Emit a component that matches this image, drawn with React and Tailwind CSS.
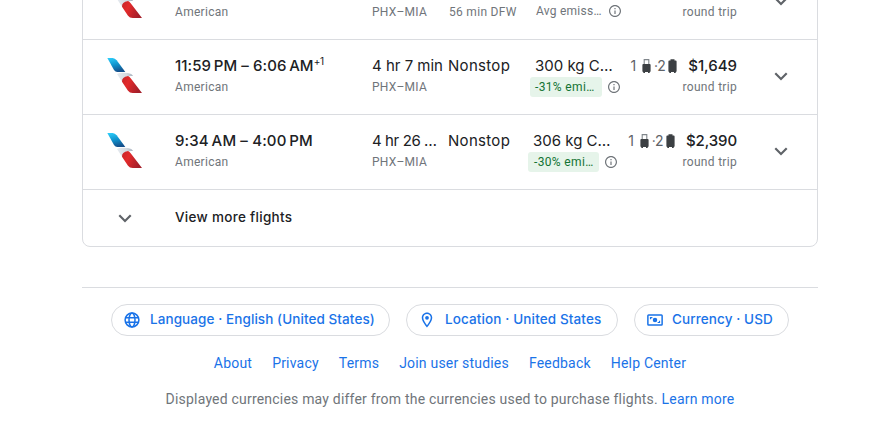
import React from "react";

const sans = "font-['Inter','Liberation_Sans',sans-serif]";
const roboto = "font-[Roboto,sans-serif]";

function AirlineLogo() {
  return (
    <svg className="block h-[35px] w-[35px]" viewBox="81 69 105 105">
      <defs>
        <linearGradient id="blue" x1="0.2" y1="0" x2="0.5" y2="1">
          <stop offset="0" stopColor="#2bcbf8" />
          <stop offset="0.5" stopColor="#1093cd" />
          <stop offset="1" stopColor="#14508c" />
        </linearGradient>
        <linearGradient id="red" x1="0" y1="0" x2="1" y2="0.4">
          <stop offset="0" stopColor="#c5262b" />
          <stop offset="0.4" stopColor="#e32a2b" />
          <stop offset="1" stopColor="#a51f2a" />
        </linearGradient>
        <linearGradient id="grey" x1="0" y1="0" x2="1" y2="0">
          <stop offset="0" stopColor="#e6ebf0" />
          <stop offset="0.6" stopColor="#d3dae1" />
          <stop offset="1" stopColor="#a9b3bf" />
        </linearGradient>
      </defs>
      <path fill="url(#blue)" d="M82 69h16q7 1 12 7l26 35h-24q-6 0-10-6z" />
      <path fill="url(#grey)" d="M111 117q6-4 16-4l16 1q13 2 16 9-17-1-24 4-8 5-9 13z" />
      <path fill="url(#red)" d="M126 140q-1-14 18-17 4 1 8 7l34 44h-28q-9 0-14-7z" />
    </svg>
  );
}

function Chevron() {
  return (
    <svg className="block h-6 w-6" viewBox="0 0 24 24" fill="#5f6368">
      <path d="M16.59 8.59 12 13.17 7.41 8.59 6 10l6 6 6-6z" transform="translate(-.96 -.8) scale(1.08)" />
    </svg>
  );
}

function Info() {
  return (
    <svg className="block h-3 w-3 shrink-0" viewBox="2 2 20 20" fill="#70757a">
      <path d="M11 7h2v2h-2zm0 4h2v6h-2zm1-9C6.48 2 2 6.48 2 12s4.480 10 10 10 10-4.480 10-10S17.520 2 12 2zm0 18c-4.410 0-8-3.590-8-8s3.590-8 8-8 8 3.590 8 8-3.590 8-8 8z" />
    </svg>
  );
}

function CarryOn() {
  return (
    <svg className="block h-[14px] w-[9px]" viewBox="0 0 9 14" fill="#3c4043">
      <path d="M2.200 5.500V.6h4.600v4.900" fill="none" stroke="#80868b" strokeWidth="1.100" />
      <path d="M1.300 5h6.400q.9 0 .9 1v6.200q0 .8-.9 .8v1H6v-1H3v1H1.300v-1q-.9 0-.9-.8V6q0-1 .9-1z" />
    </svg>
  );
}

function CheckedBag() {
  return (
    <svg className="block h-[14px] w-[9px]" viewBox="0 0 9 14" fill="#3c4043">
      <path d="M2.500 1.500V.3h4v1.200h1.200q.9 0 .9 1V12q0 1-.9 1v1H6v-1H3v1H1.300v-1q-.9 0-.9-1V2.500q0-1 .9-1z" />
    </svg>
  );
}

function Emission({ amount, label, badge, width }) {
  return (
    <div className={width}>
      <div className="h-5 pl-[5px] text-[15px] leading-[19px] tracking-[0px] text-[#202124]">{amount}</div>
      <div className={`mt-px flex h-5 items-center ${roboto}`}>
        <span className={`h-5 rounded-[3px] text-xs leading-5 tracking-[0.35px] whitespace-nowrap ${badge}`}>{label}</span>
        <Info />
      </div>
    </div>
  );
}

function FlightRow({ time, plus, timeClass, duration, durationClass, stops, stopInfo, stopsWidth, emission, price, priceClass, bagGap }) {
  return (
    <div className="flex h-[75px] border-b border-[#dadce0] pt-4">
      <div className="w-[92px] pt-[2px] pl-6">
        <AirlineLogo />
      </div>
      <div className="w-[197px]">
        <div className={`h-5 text-[15px] leading-[19px] font-medium whitespace-nowrap text-[#202124] ${timeClass}`}>
          {time}
          {plus && <sup className="top-[-6px] text-[10px] leading-none font-normal tracking-[-0.3px]">{plus}</sup>}
        </div>
        <div className={`mt-[3px] text-xs leading-4 tracking-[0.3px] text-[#70757a] ${roboto}`}>American</div>
      </div>
      <div className="w-[76px]">
        <div className={`h-5 text-[15px] leading-[19px] whitespace-nowrap text-[#202124] ${durationClass}`}>{duration}</div>
        <div className={`mt-[3px] text-xs leading-4 tracking-[0.3px] text-[#70757a] ${roboto}`}>PHX–MIA</div>
      </div>
      <div className={stopsWidth}>
        <div className="h-5 text-[15px] leading-[19px] tracking-[0.3px] text-[#202124]">{stops}</div>
        <div className={`mt-[3px] pl-px text-xs leading-4 tracking-[0.3px] text-[#70757a] ${roboto}`}>{stopInfo}</div>
      </div>
      {emission}
      <div className="flex flex-1 flex-col items-end">
        <div className="flex h-5 items-center whitespace-nowrap">
          {price && (
            <div className={`flex h-5 items-center text-sm leading-5 text-[#5f6368] ${bagGap}`}>
              <span className="mr-[6px]">1</span>
              <CarryOn />
              <span className="mr-[3px] ml-[3px] tracking-[-0.5px]">·2</span>
              <CheckedBag />
            </div>
          )}
          <span className={`h-5 text-[15px] leading-[19px] font-medium text-[#202124] ${priceClass}`}>{price}</span>
        </div>
        <div className={`mt-[3px] text-xs leading-4 tracking-[0.3px] text-[#70757a] ${roboto}`}>round trip</div>
      </div>
      <div className="w-[80px] pt-2 pl-8">
        <Chevron />
      </div>
    </div>
  );
}

function Pill({ icon, className, children }) {
  return (
    <button className={`flex h-8 items-center rounded-full border border-[#dadce0] text-[13.5px] leading-5 font-medium whitespace-nowrap text-[#1a73e8] ${className}`}>
      {icon}
      <span className="pb-[2px]">{children}</span>
    </button>
  );
}

const Globe = (
  <svg className="mr-[9px] h-[18px] w-[18px]" viewBox="0 0 24 24" fill="none" stroke="#1a73e8" strokeWidth="2">
    <circle cx="12" cy="12" r="9.200" />
    <ellipse cx="12" cy="12" rx="4" ry="9.200" />
    <path d="M3.500 9h17M3.500 15h17" />
  </svg>
);

const Pin = (
  <svg className="mr-[9px] h-[18px] w-[18px]" viewBox="0 0 24 24" fill="#1a73e8">
    <path d="M12 2C8.130 2 5 5.130 5 9c0 5.250 7 13 7 13s7-7.750 7-13c0-3.870-3.130-7-7-7zM7 9c0-2.760 2.240-5 5-5s5 2.240 5 5c0 2.880-2.880 7.190-5 9.880C9.920 16.210 7 11.850 7 9z" />
    <circle cx="12" cy="9" r="2.500" />
  </svg>
);

const Money = (
  <svg className="mr-[8px] h-[18px] w-[18px]" viewBox="0 0 24 24" fill="none" stroke="#1a73e8" strokeWidth="2">
    <rect x="2.500" y="5.200" width="19" height="13.600" rx="1" />
    <circle cx="12" cy="12" r="3" fill="#1a73e8" stroke="none" />
    <path d="M6 11V8.700H8.500M18 13v2.300h-2.500" strokeWidth="1.600" />
  </svg>
);

const links = ["About", "Privacy", "Terms", "Join user studies", "Feedback", "Help Center"];

export default function App() {
  return (
    <div className={`h-[434px] w-[883px] overflow-hidden bg-white ${sans}`}>
      <div className="-mt-[36px] ml-[82px] h-[283px] w-[736px] rounded-b-lg border border-[#dadce0]">
        <FlightRow
          stopInfo="56 min DFW"
          stopsWidth="w-[82px]"
          emission={
            <div className={`mt-[22px] flex h-4 w-[100px] items-center pl-[6px] text-xs tracking-[0.25px] text-[#70757a] ${roboto}`}>
              <span className="mr-[7px] whitespace-nowrap">Avg emiss…</span>
              <Info />
            </div>
          }
        />
        <FlightRow
          time={"11:59\u202fPM – 6:06\u202fAM"}
          plus="+1"
          timeClass="tracking-[0.08px]"
          duration="4 hr 7 min"
          durationClass="tracking-[0px]"
          stops="Nonstop"
          stopsWidth="w-[82px]"
          emission={<Emission amount="300 kg C…" label="-31% emi…" badge="mr-[6px] w-[72px] bg-[#e6f4ea] pl-[5px] text-[#137333]" width="w-[92px]" />}
          price="$1,649"
          priceClass="tracking-[0px]"
          bagGap="mr-[11px]"
        />
        <FlightRow
          time={"9:34\u202fAM – 4:00\u202fPM"}
          timeClass="tracking-[0.15px]"
          duration="4 hr 26 …"
          durationClass="tracking-[-0.4px]"
          stops="Nonstop"
          stopsWidth="w-[80px]"
          emission={<Emission amount="306 kg C…" label="-30% emi…" badge="mr-[6px] w-[71px] bg-[#e6f4ea] pl-[6px] text-[#137333]" width="w-[92px]" />}
          price="$2,390"
          priceClass="tracking-[-0.1px]"
          bagGap="mr-[11px]"
        />
        <div className="flex h-14 items-center">
          <div className="w-[92px] pl-[30px]">
            <Chevron />
          </div>
          <span className="pb-[2px] text-[13.5px] leading-5 font-medium tracking-[0.3px] text-[#202124]">View more flights</span>
        </div>
      </div>
      <footer className="mt-10 ml-[82px] w-[736px] border-t border-[#dadce0] pt-4">
        <div className="flex justify-center gap-4">
          <Pill icon={Globe} className="w-[279px] pl-[11px] tracking-[0.08px]">Language · English (United States)</Pill>
          <Pill icon={Pin} className="w-[212px] pl-[11px] tracking-[0.12px]">Location · United States</Pill>
          <Pill icon={Money} className="w-[155px] pl-[11px] tracking-[0.1px]">Currency · USD</Pill>
        </div>
        <nav className={`mt-[17px] flex justify-center gap-5 text-sm leading-5 tracking-[0.2px] text-[#1a73e8] ${roboto}`}>
          {links.map((l) => (
            <a key={l}>{l}</a>
          ))}
        </nav>
        <p className={`mt-4 text-center text-sm leading-5 tracking-[0.2px] text-[#70757a] ${roboto}`}>
          Displayed currencies may differ from the currencies used to purchase flights. <a className="text-[#1a73e8]">Learn more</a>
        </p>
      </footer>
    </div>
  );
}
